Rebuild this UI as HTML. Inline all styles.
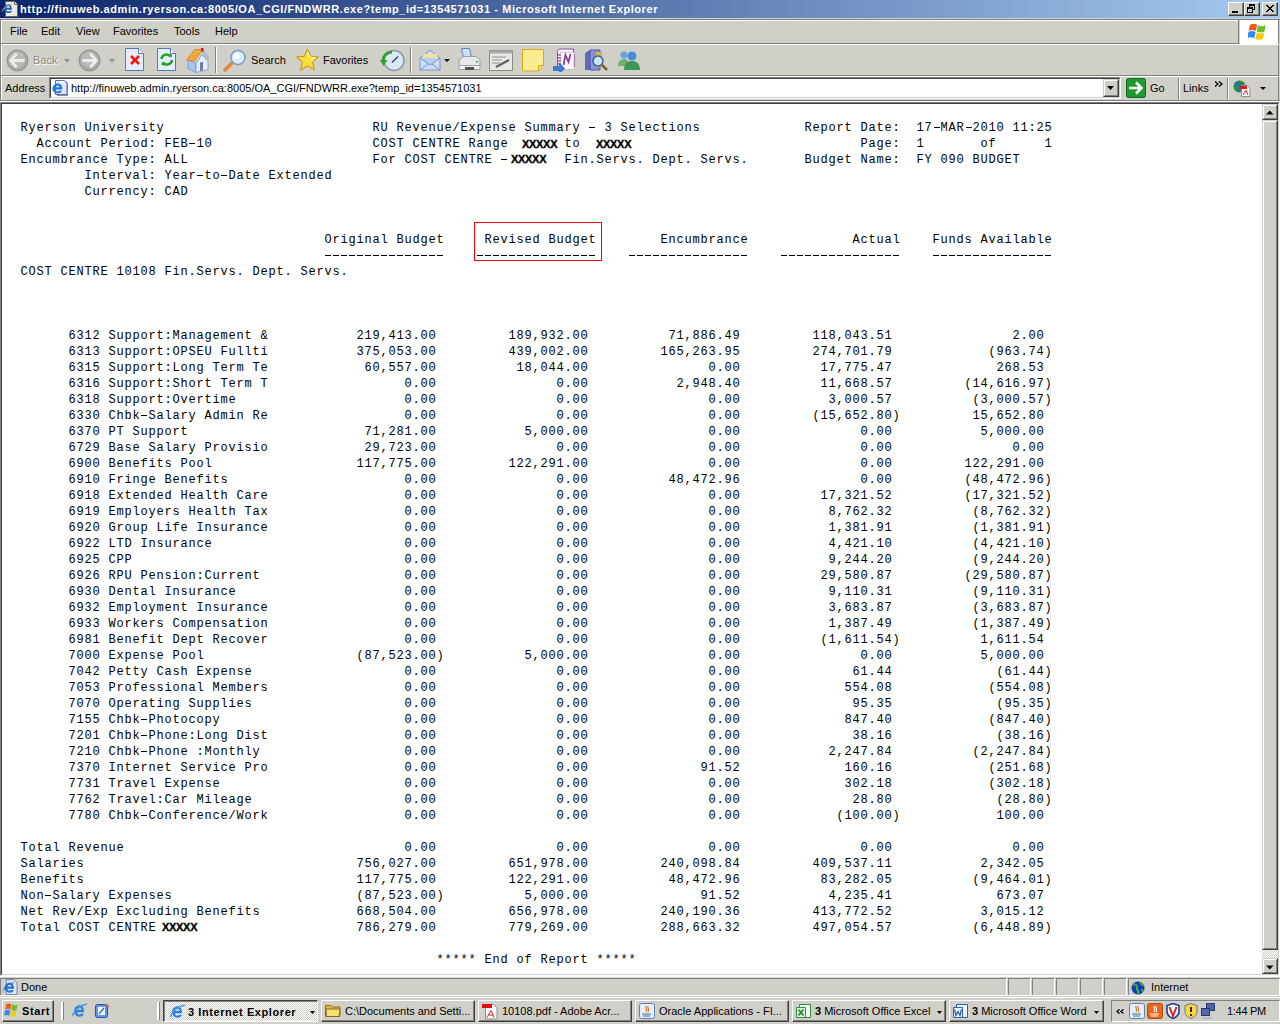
<!DOCTYPE html>
<html><head><meta charset="utf-8">
<style>
*{margin:0;padding:0;box-sizing:border-box}
html,body{width:1280px;height:1024px;overflow:hidden;background:#D0D0C8;font-family:"Liberation Sans",sans-serif;font-size:11px;color:#000}
.a{position:absolute}
.t{position:absolute;white-space:pre;line-height:13px}
#title{left:0;top:0;width:1280px;height:18px;background:linear-gradient(to right,#0A246A,#A6CAF0)}
#title .tx{left:20px;top:3px;color:#fff;font-weight:bold;font-size:11px;letter-spacing:0.565px}
.cb{position:absolute;top:2px;width:16px;height:14px;background:#D0D0C8;border-top:1px solid #fff;border-left:1px solid #fff;border-right:1px solid #404040;border-bottom:1px solid #404040;box-shadow:inset -1px -1px 0 #808080}
.hl{position:absolute;height:1px}
.vl{position:absolute;width:1px}
.sep{position:absolute;width:2px;border-left:1px solid #808080;border-right:1px solid #fff}
pre#rep{position:absolute;left:20.4px;top:120px;font-family:"Liberation Mono",monospace;font-size:12px;letter-spacing:0.8px;line-height:16px;color:#000;white-space:pre}
.xx{position:absolute;font-family:"Liberation Sans",sans-serif;font-weight:bold;font-size:11px;line-height:10px;letter-spacing:-0.3px;color:#000;background:#fff;-webkit-text-stroke:0.35px #000}
.hy{display:inline-block;width:8px;height:16px;vertical-align:top;background:linear-gradient(#000,#000) no-repeat 1px 7px/6px 1px}
.dash{position:absolute;top:255px;height:1px;width:120px;background:repeating-linear-gradient(to right,#000 0 6px,transparent 6px 8px)}
.sb{position:absolute;background:#D0D0C8;border-top:1px solid #D0D0C8;border-left:1px solid #D0D0C8;border-right:1px solid #404040;border-bottom:1px solid #404040}
.sbi{position:absolute;left:0;top:0;right:0;bottom:0;border-top:1px solid #fff;border-left:1px solid #fff;border-right:1px solid #808080;border-bottom:1px solid #808080}
.tb{position:absolute;top:1000px;height:22px;background:#D0D0C8;border-top:1px solid #fff;border-left:1px solid #fff;border-right:1px solid #404040;border-bottom:1px solid #404040}
.tbi{position:absolute;left:0;top:0;right:0;bottom:0;border-right:1px solid #808080;border-bottom:1px solid #808080}
</style></head><body>

<!-- TITLE BAR -->
<div id="title" class="a">
  <svg class="a" style="left:0px;top:0px" width="19" height="18" viewBox="0 0 19 18">
    <path d="M5.5 1.5h9l3 3v12h-12z" fill="#ECEADF" stroke="#6C685C" stroke-width="1"/>
    <path d="M14.5 1.5v3h3" fill="#fff" stroke="#6C685C" stroke-width="1"/>
    <path d="M8.6 4.2c-2.6 0-4.6 2-4.6 4.5s1.9 4.4 4.4 4.4c1.7 0 3-.8 3.5-2.2H9.6c-.3.4-.7.7-1.3.7-1 0-1.7-.8-1.8-1.8h5.4c.2-3-1.2-5.6-3.3-5.6zm-2 3.6c.1-.9.8-1.6 1.8-1.6.9 0 1.6.7 1.7 1.6z" fill="#1E5AD8"/>
    <path d="M2 11.5c1.5-3.5 4.5-6.2 10-7" fill="none" stroke="#D8B040" stroke-width="1"/>
  </svg>
  <div class="t tx">http://finuweb.admin.ryerson.ca:8005/OA_CGI/FNDWRR.exe?temp_id=1354571031 - Microsoft Internet Explorer</div>
  <div class="cb" style="left:1228px"><svg class="a" style="left:0;top:0" width="14" height="12" shape-rendering="crispEdges"><rect x="3" y="8" width="6" height="2" fill="#000"/></svg></div>
  <div class="cb" style="left:1244px"><svg class="a" style="left:0;top:0" width="14" height="12" shape-rendering="crispEdges"><rect x="4" y="1" width="6" height="2" fill="#000"/><rect x="9" y="1" width="1" height="6" fill="#000"/><rect x="7" y="6" width="3" height="1" fill="#000"/><rect x="4" y="1" width="1" height="3" fill="#000"/><rect x="2" y="4" width="6" height="2" fill="#000"/><rect x="2" y="4" width="1" height="6" fill="#000"/><rect x="7" y="4" width="1" height="6" fill="#000"/><rect x="2" y="9" width="6" height="1" fill="#000"/></svg></div>
  <div class="cb" style="left:1262px"><svg class="a" style="left:0;top:0" width="14" height="12" shape-rendering="crispEdges"><rect x="3" y="2" width="2" height="1" fill="#000"/><rect x="9" y="2" width="2" height="1" fill="#000"/><rect x="4" y="3" width="2" height="1" fill="#000"/><rect x="8" y="3" width="2" height="1" fill="#000"/><rect x="5" y="4" width="4" height="1" fill="#000"/><rect x="6" y="5" width="2" height="1" fill="#000"/><rect x="5" y="6" width="4" height="1" fill="#000"/><rect x="4" y="7" width="2" height="1" fill="#000"/><rect x="8" y="7" width="2" height="1" fill="#000"/><rect x="3" y="8" width="2" height="1" fill="#000"/><rect x="9" y="8" width="2" height="1" fill="#000"/></svg></div>
</div>

<!-- frame lines below title -->
<div class="hl" style="left:0;top:18px;width:1280px;background:#D0D0C8"></div>
<div class="hl" style="left:0;top:19px;width:1280px;background:#808080"></div>
<div class="vl" style="left:0;top:19px;height:82px;background:#808080"></div>
<div class="vl" style="left:1px;top:20px;height:81px;background:#fff"></div>

<!-- MENU BAR -->
<div class="hl" style="left:1px;top:20px;width:1238px;background:#fff"></div>
<div class="t" style="left:10px;top:25px">File</div>
<div class="t" style="left:41px;top:25px">Edit</div>
<div class="t" style="left:76px;top:25px">View</div>
<div class="t" style="left:113px;top:25px">Favorites</div>
<div class="t" style="left:174px;top:25px">Tools</div>
<div class="t" style="left:215px;top:25px">Help</div>
<div class="vl" style="left:1238px;top:20px;height:24px;background:#808080"></div>
<div class="a" style="left:1240px;top:20px;width:38px;height:24px;background:#fff"></div>
<svg class="a" style="left:1248px;top:22px" width="22" height="19" viewBox="0 0 24 21">
  <path d="M2 3c2.5-1.5 5-1.5 8 0l-1.5 7c-3-1.5-5.5-1.5-8 0z" fill="#F05A1E"/>
  <path d="M11 3.5c3 1.5 5.5 1.5 8.5 0l-1.5 7c-3 1.5-5.5 1.5-8.5 0z" fill="#6EBE2C"/>
  <path d="M0.3 11c2.5-1.5 5-1.5 8 0l-1.5 7c-3-1.5-5.5-1.5-8 0z" fill="#2E8DEF"/>
  <path d="M9.5 11.5c3 1.5 5.5 1.5 8.5 0l-1.5 7c-3 1.5-5.5 1.5-8.5 0z" fill="#F8C80A"/>
</svg>
<div class="hl" style="left:1px;top:43px;width:1238px;background:#808080"></div>
<div class="vl" style="left:1278px;top:19px;height:82px;background:#808080"></div>
<div class="hl" style="left:1px;top:44px;width:1278px;background:#fff"></div>

<!-- TOOLBAR -->
<div id="toolbar">
  <!-- back -->
  <svg class="a" style="left:6px;top:49px" width="23" height="23" viewBox="0 0 23 23">
    <circle cx="11.5" cy="11.5" r="10.5" fill="#A8A8A4" stroke="#8C8C88"/>
    <circle cx="11" cy="10.5" r="8" fill="#BABAB6"/>
    <path d="M10 5.5L4.5 11.5L10 17.5M5 11.5h12.5" fill="none" stroke="#EDEDED" stroke-width="2.8" stroke-linecap="round" stroke-linejoin="round"/>
  </svg>
  <div class="t" style="left:33px;top:54px;color:#888;text-shadow:1px 1px 0 #fff">Back</div>
  <svg class="a" style="left:64px;top:59px" width="6" height="4"><path d="M0 0h6l-3 3.5z" fill="#8C8C8C"/></svg>
  <!-- forward -->
  <svg class="a" style="left:78px;top:49px" width="23" height="23" viewBox="0 0 23 23">
    <circle cx="11.5" cy="11.5" r="10.5" fill="#A8A8A4" stroke="#8C8C88"/>
    <circle cx="11" cy="10.5" r="8" fill="#BABAB6"/>
    <path d="M13 5.5L18.5 11.5L13 17.5M18 11.5H5.5" fill="none" stroke="#EDEDED" stroke-width="2.8" stroke-linecap="round" stroke-linejoin="round"/>
  </svg>
  <svg class="a" style="left:109px;top:59px" width="6" height="4"><path d="M0 0h6l-3 3.5z" fill="#8C8C8C"/></svg>
  <!-- stop -->
  <svg class="a" style="left:125px;top:48px" width="20" height="23" viewBox="0 0 20 23">
    <path d="M0.5 0.5h13l5 5v17H0.5z" fill="#E4EEFA" stroke="#5A78B8"/>
    <path d="M13.5 0.5v5h5" fill="#fff" stroke="#5A78B8"/>
    <path d="M6 8l8 8M14 8l-8 8" stroke="#F01808" stroke-width="2.6"/>
  </svg>
  <!-- refresh -->
  <svg class="a" style="left:157px;top:48px" width="20" height="23" viewBox="0 0 20 23">
    <path d="M0.5 0.5h13l5 5v17H0.5z" fill="#E4EEFA" stroke="#5A78B8"/>
    <path d="M13.5 0.5v5h5" fill="#fff" stroke="#5A78B8"/>
    <path d="M4.5 11a5 5 0 0 1 9-2.5M15 12a5 5 0 0 1-9 2.5" fill="none" stroke="#20A020" stroke-width="2.4"/>
    <path d="M11.5 6l3.5 0.5-0.5 3.5zM8 17.5l-3.5-0.5 0.5-3.5z" fill="#20A020"/>
  </svg>
  <!-- home -->
  <svg class="a" style="left:186px;top:48px" width="24" height="25" viewBox="0 0 24 25">
    <path d="M2 12l8 3.5v9L2 20.5z" fill="#A8C8F0" stroke="#7890C0" stroke-width="0.8"/>
    <path d="M10 15.5l6-9 6 7v8l-12 3z" fill="#E4EEFC" stroke="#7890C0" stroke-width="0.8"/>
    <path d="M0.5 12L9 1.5h7.5L8.5 13z" fill="#F4A838" stroke="#D87818" stroke-width="0.8"/>
    <path d="M16.5 1.5l6 8.5-1.5.5-4.5-6.5z" fill="#E8F0FC" stroke="#7890C0" stroke-width="0.8"/>
    <rect x="15" y="0" width="2.5" height="3.5" fill="#C02818"/>
    <path d="M14 14.5l3-.7v8.5l-3 .7z" fill="#7078A8"/>
  </svg>
  <div class="sep" style="left:215px;top:47px;height:26px"></div>
  <!-- search -->
  <svg class="a" style="left:223px;top:49px" width="24" height="23" viewBox="0 0 24 23">
    <path d="M2 21l7-7" stroke="#E08838" stroke-width="3.5" stroke-linecap="round"/>
    <circle cx="15" cy="8.5" r="7" fill="#D8EEFC" stroke="#7A9CC0" stroke-width="1.5"/>
    <circle cx="13.5" cy="7" r="3" fill="#fff" opacity=".8"/>
  </svg>
  <div class="t" style="left:251px;top:54px">Search</div>
  <!-- star -->
  <svg class="a" style="left:295px;top:48px" width="25" height="24" viewBox="0 0 25 24">
    <path d="M12.5 1l3.2 7.3 7.8.7-5.9 5.2 1.8 7.8-6.9-4.1-6.9 4.1 1.8-7.8L1.5 9l7.8-.7z" fill="#F8DC38" stroke="#C09010" stroke-width="1"/>
    <path d="M12.5 4l2 5 5 .5-3.5 3" fill="none" stroke="#FFF6B0" stroke-width="1.2"/>
  </svg>
  <div class="t" style="left:323px;top:54px">Favorites</div>
  <!-- history -->
  <svg class="a" style="left:380px;top:49px" width="25" height="23" viewBox="0 0 25 23">
    <circle cx="14" cy="11.5" r="10" fill="#D8E8F4" stroke="#8898A8" stroke-width="1.5"/>
    <path d="M14 11.5l4-4M14 11.5l-2 2" stroke="#404858" stroke-width="1.5"/>
    <path d="M3 12c0-5 4-9 9-9" fill="none" stroke="#30A030" stroke-width="3"/>
    <path d="M0 11l3.5 6 4-6z" fill="#30A030"/>
  </svg>
  <div class="sep" style="left:410px;top:47px;height:26px"></div>
  <!-- mail -->
  <svg class="a" style="left:419px;top:48px" width="22" height="24" viewBox="0 0 22 24">
    <path d="M1 10l10-8 10 8v12H1z" fill="#C8DEF8" stroke="#8890C8"/>
    <path d="M4 6h14v8H4z" fill="#F8E0A0"/>
    <path d="M1 10l10 7 10-7" fill="#B0D0F4" stroke="#8890C8"/>
    <path d="M1 22l8-6M21 22l-8-6" stroke="#8890C8"/>
  </svg>
  <svg class="a" style="left:444px;top:59px" width="6" height="4"><path d="M0 0h6l-3 3z" fill="#000"/></svg>
  <!-- print -->
  <svg class="a" style="left:458px;top:48px" width="23" height="24" viewBox="0 0 23 24">
    <path d="M3.5 0.5h8l2 9h-8z" fill="#C8E0F8" stroke="#7080C0" stroke-width="1"/>
    <path d="M1 11.5l5-3h12l4 3v6H1z" fill="#E8E8E8" stroke="#A0A0A0" stroke-width="1"/>
    <path d="M1 17.5h21v4H1z" fill="#F4F4F4" stroke="#A0A0A0" stroke-width="1"/>
    <path d="M7 19h9v3H7z" fill="#505058"/>
    <rect x="18" y="13" width="2" height="1.5" fill="#30C030"/>
  </svg>
  <!-- edit -->
  <svg class="a" style="left:489px;top:50px" width="24" height="21" viewBox="0 0 24 21">
    <rect x="0.5" y="0.5" width="23" height="20" fill="#E8E8E4" stroke="#888"/>
    <rect x="0.5" y="0.5" width="23" height="3" fill="#A8A8A8"/>
    <path d="M3 7h14M3 10h10M3 13h8" stroke="#909090"/>
    <path d="M7 17l13-7" stroke="#606060" stroke-width="2"/>
  </svg>
  <!-- note -->
  <svg class="a" style="left:522px;top:49px" width="23" height="23" viewBox="0 0 23 23">
    <path d="M0.5 0.5h21v16l-5 5.5H0.5z" fill="#FCEC90" stroke="#D8A818"/>
    <path d="M16.5 22v-5.5h5" fill="#F8D868" stroke="#D8A818"/>
  </svg>
  <!-- onenote -->
  <svg class="a" style="left:553px;top:48px" width="25" height="24" viewBox="0 0 25 24">
    <path d="M4.5 3.5c0-1.5 1-2.5 2.5-2.5h13.5v20H7.5c-1.5 0-3-1-3-2.5z" fill="#F4ECF4" stroke="#9050A0" stroke-width="1"/>
    <path d="M7.5 4.5h13.5v17H7.5z" fill="#fff" stroke="#C8B0C8" stroke-width="0.6"/>
    <path d="M5 7h3M5 10h3M5 13h3M5 16h3" stroke="#A060B0" stroke-width="1.4"/>
    <path d="M10.5 17l2-10 3 7 2-8" fill="none" stroke="#8C3C9C" stroke-width="1.8"/>
    <path d="M21.5 6v13" stroke="#B080B8" stroke-width="1.2"/>
    <path d="M0.5 18.5h6v-3.5l5 5.5-5 5.5v-3.5h-6z" fill="#3C78D8" stroke="#2050A8" stroke-width="0.6"/>
  </svg>
  <!-- research -->
  <svg class="a" style="left:584px;top:49px" width="24" height="22" viewBox="0 0 24 22">
    <path d="M1 4l5-3v20l-5 0z" fill="#6068C0"/>
    <path d="M6 1h10v20H6z" fill="#8890D8" stroke="#5058A8"/>
    <path d="M12 3h6v15h-6z" fill="#D8B050"/>
    <circle cx="14" cy="12" r="5" fill="#C8E4F8" stroke="#406080" stroke-width="1.5"/>
    <path d="M18 16l5 5" stroke="#806030" stroke-width="2.5"/>
  </svg>
  <!-- messenger -->
  <svg class="a" style="left:617px;top:50px" width="24" height="21" viewBox="0 0 24 21">
    <circle cx="7" cy="5" r="3.5" fill="#6AA0E0"/>
    <path d="M1 16c0-5 3-7 6-7s5 2 5 7z" fill="#70B070"/>
    <circle cx="15" cy="6" r="4.5" fill="#4C8CD8"/>
    <path d="M7 20c0-7 4-9 8-9s8 2 8 9z" fill="#3C9850"/>
  </svg>
</div>
<div class="hl" style="left:1px;top:75px;width:1278px;background:#808080"></div>
<div class="hl" style="left:1px;top:76px;width:1278px;background:#fff"></div>

<!-- ADDRESS BAR -->
<div class="t" style="left:5px;top:82px">Address</div>
<div class="a" style="left:49px;top:77px;width:1072px;height:22px;background:#fff;border-top:1px solid #808080;border-left:1px solid #808080;border-right:1px solid #fff;border-bottom:1px solid #fff"></div>
<div class="a" style="left:50px;top:78px;width:1070px;height:20px;border-top:1px solid #404040;border-left:1px solid #404040;border-right:1px solid #D0D0C8;border-bottom:1px solid #D0D0C8"></div>
<svg class="a" style="left:51px;top:79px" width="18" height="18" viewBox="0 0 18 18">
  <path d="M6 2h9l2 2v13H6z" fill="#909090"/>
  <path d="M4.5 1.5h9l2.5 2.5v11.5H4.5z" fill="#DCE6FA" stroke="#6068B0" stroke-width="1"/>
  <path d="M5 2h8v2H5z" fill="#fff"/>
  <path d="M7 4.5c-3 0-5.5 2.2-5.5 5s2.3 4.8 5.2 4.8c2 0 3.6-1 4.2-2.6H8.3c-.4.5-.9.8-1.6.8-1.2 0-2.1-.9-2.2-2.1h6.8c.2-3.5-1.6-5.9-4.3-5.9zm-2.5 3.8c.2-1 1-1.8 2.2-1.8 1.1 0 1.9.7 2 1.8z" fill="#1C78E0"/>
  <path d="M1 9.5c2-4 5.5-7.5 11-8.5" fill="none" stroke="#78B8F0" stroke-width="1" stroke-dasharray="1 1"/>
</svg>
<div class="t" style="left:71px;top:82px">http://finuweb.admin.ryerson.ca:8005/OA_CGI/FNDWRR.exe?temp_id=1354571031</div>
<!-- dropdown btn -->
<div class="a" style="left:1103px;top:79px;width:16px;height:18px;background:#D0D0C8;border-top:1px solid #D0D0C8;border-left:1px solid #D0D0C8;border-right:1px solid #404040;border-bottom:1px solid #404040">
  <div class="a" style="left:0;top:0;right:0;bottom:0;border-top:1px solid #fff;border-left:1px solid #fff;border-right:1px solid #808080;border-bottom:1px solid #808080"></div>
  <svg class="a" style="left:3px;top:6px" width="7" height="4"><path d="M0 0h7l-3.5 4z" fill="#000"/></svg>
</div>
<!-- go -->
<svg class="a" style="left:1126px;top:78px" width="20" height="20" viewBox="0 0 20 20">
  <rect x="0.5" y="0.5" width="19" height="19" rx="2" fill="#1E9A2E" stroke="#0E6A1E"/>
  <path d="M3 10h12M10 4.5l5.5 5.5-5.5 5.5" fill="none" stroke="#fff" stroke-width="2.6"/>
</svg>
<div class="t" style="left:1150px;top:82px">Go</div>
<div class="sep" style="left:1178px;top:78px;height:21px"></div>
<div class="t" style="left:1183px;top:82px">Links</div>
<svg class="a" style="left:1214px;top:81px" width="9" height="6"><path d="M1 0.5l3 2.5-3 2.5M5 0.5l3 2.5-3 2.5" fill="none" stroke="#000" stroke-width="1.3"/></svg>
<div class="sep" style="left:1227px;top:78px;height:21px"></div>
<svg class="a" style="left:1233px;top:80px" width="18" height="17" viewBox="0 0 18 17">
  <circle cx="6.5" cy="6.5" r="6" fill="#2C8C3C"/>
  <path d="M2 3c2 1 4 0 5 2s-2 4 0 6" fill="none" stroke="#2070D0" stroke-width="2.5"/>
  <path d="M8.5 5.5h6l2.5 2.5v8.5h-8.5z" fill="#F4F4F4" stroke="#909090"/>
  <rect x="7" y="6" width="7" height="3" fill="#E81818"/>
  <path d="M10 15l3-5 2 5" fill="none" stroke="#E83030" stroke-width="1"/>
</svg>
<svg class="a" style="left:1260px;top:87px" width="6" height="4"><path d="M0 0h6l-3 3z" fill="#000"/></svg>
<div class="hl" style="left:0;top:100px;width:1280px;background:#808080"></div>
<div class="hl" style="left:0;top:101px;width:1280px;background:#fff"></div>

<!-- CONTENT -->
<div class="a" style="left:0;top:102px;width:1280px;height:874px;background:#fff;border-top:1px solid #808080;border-left:1px solid #808080;border-right:1px solid #fff;border-bottom:1px solid #fff"></div>
<div class="a" style="left:1px;top:103px;width:1278px;height:872px;border-top:1px solid #404040;border-left:1px solid #404040;border-right:1px solid #D0D0C8;border-bottom:1px solid #D0D0C8"></div>

<pre id="rep">Ryerson University                          RU Revenue/Expense Summary <span class="hy"></span> 3 Selections             Report Date:  17<span class="hy"></span>MAR<span class="hy"></span>2010 11:25
  Account Period: FEB<span class="hy"></span>10                    COST CENTRE Range       to                                   Page:  1       of      1
Encumbrance Type: ALL                       For COST CENTRE <span class="hy"></span>       Fin.Servs. Dept. Servs.       Budget Name:  FY 090 BUDGET
        Interval: Year<span class="hy"></span>to<span class="hy"></span>Date Extended
        Currency: CAD


                                      Original Budget     Revised Budget        Encumbrance             Actual    Funds Available

COST CENTRE 10108 Fin.Servs. Dept. Servs.



      6312 Support:Management &amp;           219,413.00         189,932.00          71,886.49         118,043.51               2.00 
      6313 Support:OPSEU Fullti           375,053.00         439,002.00         165,263.95         274,701.79            (963.74)
      6315 Support:Long Term Te            60,557.00          18,044.00               0.00          17,775.47             268.53 
      6316 Support:Short Term T                 0.00               0.00           2,948.40          11,668.57         (14,616.97)
      6318 Support:Overtime                     0.00               0.00               0.00           3,000.57          (3,000.57)
      6330 Chbk<span class="hy"></span>Salary Admin Re                 0.00               0.00               0.00         (15,652.80)         15,652.80 
      6370 PT Support                      71,281.00           5,000.00               0.00               0.00           5,000.00 
      6729 Base Salary Provisio            29,723.00               0.00               0.00               0.00               0.00 
      6900 Benefits Pool                  117,775.00         122,291.00               0.00               0.00         122,291.00 
      6910 Fringe Benefits                      0.00               0.00          48,472.96               0.00         (48,472.96)
      6918 Extended Health Care                 0.00               0.00               0.00          17,321.52         (17,321.52)
      6919 Employers Health Tax                 0.00               0.00               0.00           8,762.32          (8,762.32)
      6920 Group Life Insurance                 0.00               0.00               0.00           1,381.91          (1,381.91)
      6922 LTD Insurance                        0.00               0.00               0.00           4,421.10          (4,421.10)
      6925 CPP                                  0.00               0.00               0.00           9,244.20          (9,244.20)
      6926 RPU Pension:Current                  0.00               0.00               0.00          29,580.87         (29,580.87)
      6930 Dental Insurance                     0.00               0.00               0.00           9,110.31          (9,110.31)
      6932 Employment Insurance                 0.00               0.00               0.00           3,683.87          (3,683.87)
      6933 Workers Compensation                 0.00               0.00               0.00           1,387.49          (1,387.49)
      6981 Benefit Dept Recover                 0.00               0.00               0.00          (1,611.54)          1,611.54 
      7000 Expense Pool                   (87,523.00)          5,000.00               0.00               0.00           5,000.00 
      7042 Petty Cash Expense                   0.00               0.00               0.00              61.44             (61.44)
      7053 Professional Members                 0.00               0.00               0.00             554.08            (554.08)
      7070 Operating Supplies                   0.00               0.00               0.00              95.35             (95.35)
      7155 Chbk<span class="hy"></span>Photocopy                       0.00               0.00               0.00             847.40            (847.40)
      7201 Chbk<span class="hy"></span>Phone:Long Dist                 0.00               0.00               0.00              38.16             (38.16)
      7210 Chbk<span class="hy"></span>Phone :Monthly                  0.00               0.00               0.00           2,247.84          (2,247.84)
      7370 Internet Service Pro                 0.00               0.00              91.52             160.16            (251.68)
      7731 Travel Expense                       0.00               0.00               0.00             302.18            (302.18)
      7762 Travel:Car Mileage                   0.00               0.00               0.00              28.80             (28.80)
      7780 Chbk<span class="hy"></span>Conference/Work                 0.00               0.00               0.00            (100.00)            100.00 

Total Revenue                                   0.00               0.00               0.00               0.00               0.00 
Salaries                                  756,027.00         651,978.00         240,098.84         409,537.11           2,342.05 
Benefits                                  117,775.00         122,291.00          48,472.96          83,282.05          (9,464.01)
Non<span class="hy"></span>Salary Expenses                       (87,523.00)          5,000.00              91.52           4,235.41             673.07 
Net Rev/Exp Excluding Benefits            668,504.00         656,978.00         240,190.36         413,772.52           3,015.12 
Total COST CENTRE                         786,279.00         779,269.00         288,663.32         497,054.57          (6,448.89)

                                                    ***** End of Report *****</pre>
<div class="dash" style="left:325px"></div>
<div class="dash" style="left:477px"></div>
<div class="dash" style="left:629px"></div>
<div class="dash" style="left:781px"></div>
<div class="dash" style="left:933px"></div>
<div class="xx" style="left:522px;top:139px">XXXXX</div>
<div class="xx" style="left:596px;top:139px">XXXXX</div>
<div class="xx" style="left:511px;top:154px">XXXXX</div>
<div class="xx" style="left:162px;top:922px">XXXXX</div>
<div class="a" style="left:474px;top:222px;width:128px;height:39px;border:1px solid #F00000"></div>

<!-- SCROLLBAR -->
<div class="sb" style="left:1262px;top:104px;width:16px;height:16px"><div class="sbi"></div>
  <svg class="a" style="left:3px;top:5px" width="8" height="5"><path d="M0 4.5h7.5L3.75 0.5z" fill="#000"/></svg></div>
<div class="sb" style="left:1262px;top:120px;width:16px;height:830px"><div class="sbi"></div></div>
<div class="a" style="left:1262px;top:950px;width:16px;height:8px;background-color:#fff;background-image:linear-gradient(45deg,#D0D0C8 25%,transparent 25%,transparent 75%,#D0D0C8 75%),linear-gradient(45deg,#D0D0C8 25%,transparent 25%,transparent 75%,#D0D0C8 75%);background-size:2px 2px;background-position:0 0,1px 1px"></div>
<div class="sb" style="left:1262px;top:958px;width:16px;height:16px"><div class="sbi"></div>
  <svg class="a" style="left:3px;top:6px" width="8" height="5"><path d="M0 0.5h7.5L3.75 4.5z" fill="#000"/></svg></div>

<!-- STATUS BAR -->
<div class="hl" style="left:0;top:976px;width:1280px;background:#fff"></div>
<div class="a" style="left:0px;top:978px;width:1007px;height:18px;border-top:1px solid #808080;border-left:1px solid #808080;border-right:1px solid #fff;border-bottom:1px solid #fff"></div>
<div class="a" style="left:1008px;top:978px;width:23px;height:18px;border-top:1px solid #808080;border-left:1px solid #808080;border-right:1px solid #fff;border-bottom:1px solid #fff"></div>
<div class="a" style="left:1032px;top:978px;width:23px;height:18px;border-top:1px solid #808080;border-left:1px solid #808080;border-right:1px solid #fff;border-bottom:1px solid #fff"></div>
<div class="a" style="left:1056px;top:978px;width:23px;height:18px;border-top:1px solid #808080;border-left:1px solid #808080;border-right:1px solid #fff;border-bottom:1px solid #fff"></div>
<div class="a" style="left:1080px;top:978px;width:23px;height:18px;border-top:1px solid #808080;border-left:1px solid #808080;border-right:1px solid #fff;border-bottom:1px solid #fff"></div>
<div class="a" style="left:1104px;top:978px;width:23px;height:18px;border-top:1px solid #808080;border-left:1px solid #808080;border-right:1px solid #fff;border-bottom:1px solid #fff"></div>
<div class="a" style="left:1128px;top:978px;width:152px;height:18px;border-top:1px solid #808080;border-left:1px solid #808080;border-right:1px solid #fff;border-bottom:1px solid #fff"></div>
<svg class="a" style="left:2px;top:979px" width="16" height="16" viewBox="0 0 17 17">
  <path d="M4.5 0.5h8l3.5 3.5v12.5H4.5z" fill="#D8E4F8" stroke="#7080B0"/>
  <path d="M8.5 4c-3.2 0-5.7 2.2-5.7 5.3s2.4 5.2 5.4 5.2c2.2 0 3.8-1.1 4.4-2.8h-2.8c-.4.5-1 .9-1.7.9-1.3 0-2.3-1-2.4-2.3h7c.2-3.7-1.6-6.3-4.2-6.3zm-2.7 4.1c.2-1.1 1.1-1.9 2.4-1.9 1.2 0 2 .8 2.1 1.9z" fill="#1E70D8"/>
  <path d="M1 12.5c2-4.5 6-8 11.5-8.5" fill="none" stroke="#1E70D8" stroke-width="1"/>
</svg>
<div class="t" style="left:21px;top:981px">Done</div>
<svg class="a" style="left:1131px;top:981px" width="14" height="14" viewBox="0 0 14 14">
  <circle cx="7" cy="7" r="6.5" fill="#1838B8"/>
  <path d="M2.5 3c1.5 1 3 .5 3.5 2s-1 2.5.5 4 1 3 0 4M9 1.5c1 1.5 2.5 2 3.5 3.5M10 9c1 0 2 .5 2.5 1.5" fill="none" stroke="#38B038" stroke-width="2.2"/>
</svg>
<div class="t" style="left:1151px;top:981px">Internet</div>

<!-- TASKBAR -->
<div class="hl" style="left:0;top:995px;width:1280px;background:#fff"></div>
<div class="hl" style="left:0;top:997px;width:1280px;background:#fff"></div>
<div class="tb" style="left:2px;width:52px"><div class="tbi"></div></div>
<svg class="a" style="left:4px;top:1003px" width="16" height="14" viewBox="0 0 16 14">
  <path d="M2.2 1.2c1.7-1 3.4-1 5.2 0l-1 5.3c-1.8-1-3.5-1-5.2 0z" fill="#F05A1E"/>
  <path d="M8.3 1.6c1.7 1 3.4 1 5.2 0l-1 5.3c-1.8 1-3.5 1-5.2 0z" fill="#6EBE2C"/>
  <path d="M1 7.4c1.7-1 3.4-1 5.2 0l-1 5.3c-1.8-1-3.5-1-5.2 0z" fill="#2E8DEF"/>
  <path d="M7.1 7.8c1.7 1 3.4 1 5.2 0l-1 5.3c-1.8 1-3.5 1-5.2 0z" fill="#F8C80A"/>
</svg>
<div class="t" style="left:22px;top:1005px;font-weight:bold;letter-spacing:0.6px">Start</div>
<div class="a" style="left:61px;top:1002px;width:2px;height:18px;background:#fff"></div>
<div class="a" style="left:63px;top:1002px;width:1px;height:18px;background:#808080"></div>
<svg class="a" style="left:71px;top:1002px" width="17" height="17" viewBox="0 0 17 17">
  <path d="M8.8 3.2c-3.2 0-5.7 2.4-5.7 5.8s2.4 5.7 5.4 5.7c2.2 0 3.8-1.2 4.4-3h-2.8c-.4.5-1 1-1.7 1-1.3 0-2.3-1.1-2.4-2.5h7c.2-4-1.6-7-4.2-7zm-2.7 4.5c.2-1.2 1.1-2 2.4-2 1.2 0 2 .8 2.1 2z" fill="#2A80E0"/>
  <path d="M1.2 14c2-5.5 6.5-10 14.5-12" fill="none" stroke="#4898E8" stroke-width="1.4"/>
</svg>
<svg class="a" style="left:94px;top:1003px" width="16" height="16" viewBox="0 0 16 16">
  <rect x="1.5" y="1.5" width="12" height="13" rx="2" fill="#5A98E8" stroke="#2850A8"/>
  <rect x="4" y="4" width="7" height="8" fill="#fff"/>
  <path d="M5 11l5-6" stroke="#2A70D0" stroke-width="1.5"/>
  <path d="M12 1l3 3" stroke="#E86020" stroke-width="1.5"/>
</svg>
<div class="a" style="left:157px;top:1002px;width:2px;height:18px;background:#fff"></div>
<div class="a" style="left:159px;top:1002px;width:1px;height:18px;background:#808080"></div>
<!-- active IE group -->
<div class="a" style="left:163px;top:1000px;width:155px;height:22px;border-top:1px solid #404040;border-left:1px solid #404040;border-right:1px solid #fff;border-bottom:1px solid #fff;background-color:#fff;background-image:linear-gradient(45deg,#D0D0C8 25%,transparent 25%,transparent 75%,#D0D0C8 75%),linear-gradient(45deg,#D0D0C8 25%,transparent 25%,transparent 75%,#D0D0C8 75%);background-size:2px 2px;background-position:0 0,1px 1px"></div>
<div class="a" style="left:164px;top:1001px;width:153px;height:20px;border-top:1px solid #808080;border-left:1px solid #808080"></div>
<svg class="a" style="left:169px;top:1003px" width="17" height="17" viewBox="0 0 17 17">
  <path d="M8.8 3.2c-3.2 0-5.7 2.4-5.7 5.8s2.4 5.7 5.4 5.7c2.2 0 3.8-1.2 4.4-3h-2.8c-.4.5-1 1-1.7 1-1.3 0-2.3-1.1-2.4-2.5h7c.2-4-1.6-7-4.2-7zm-2.7 4.5c.2-1.2 1.1-2 2.4-2 1.2 0 2 .8 2.1 2z" fill="#2A80E0"/>
  <path d="M1.2 14c2-5.5 6.5-10 14.5-12" fill="none" stroke="#4898E8" stroke-width="1.4"/>
</svg>
<div class="t" style="left:188px;top:1006px;font-weight:bold;letter-spacing:0.58px">3 Internet Explorer</div>
<svg class="a" style="left:310px;top:1011px" width="5" height="3"><path d="M0 0h5l-2.5 3z" fill="#000"/></svg>
<div class="tb" style="left:321px;width:154px"><div class="tbi"></div></div>
<svg class="a" style="left:325px;top:1003px" width="16" height="14" viewBox="0 0 16 14">
  <path d="M0.5 2.5h5.5l1.5 1.5h7.5v9.5H0.5z" fill="#E0B840" stroke="#8C6C18"/>
  <path d="M1 6h14l-1 7.5H1.5z" fill="#F8E078" stroke="#8C6C18"/>
</svg>
<div class="t" style="left:345px;top:1005px">C:\Documents and Setti...</div>
<div class="tb" style="left:478px;width:154px"><div class="tbi"></div></div>
<svg class="a" style="left:482px;top:1003px" width="16" height="17" viewBox="0 0 16 17">
  <path d="M3.5 1.5h8l3.5 3.5v11H3.5z" fill="#F8F8F8" stroke="#909090"/>
  <rect x="0" y="1" width="10" height="4" fill="#E01010"/>
  <path d="M5 14.5l4-7 3 7M6.5 12h5" fill="none" stroke="#E02020" stroke-width="1"/>
</svg>
<div class="t" style="left:502px;top:1005px">10108.pdf - Adobe Acr...</div>
<div class="tb" style="left:635px;width:154px"><div class="tbi"></div></div>
<svg class="a" style="left:639px;top:1003px" width="16" height="16" viewBox="0 0 16 16">
  <rect x="0.5" y="0.5" width="15" height="15" rx="2" fill="#E8EEF8" stroke="#6080B0"/>
  <path d="M7 3c-1 2 2 3 0 6M9 3c-1 2 2 3 0 6" fill="none" stroke="#E07820" stroke-width="1.2"/>
  <path d="M3 11h9M4 13h7" stroke="#3070B0" stroke-width="1.2"/>
</svg>
<div class="t" style="left:659px;top:1005px">Oracle Applications - FI...</div>
<div class="tb" style="left:792px;width:154px"><div class="tbi"></div></div>
<svg class="a" style="left:796px;top:1003px" width="16" height="16" viewBox="0 0 16 16">
  <path d="M3.5 1.5h11v13h-11z" fill="#F0F8F0" stroke="#309040"/>
  <path d="M0.5 4.5h9v10h-9z" fill="#E8F4E8" stroke="#309040"/>
  <path d="M2.5 6.5l5 6M7.5 6.5l-5 6" stroke="#209030" stroke-width="1.8"/>
</svg>
<div class="t" style="left:815px;top:1005px"><b>3</b> Microsoft Office Excel</div>
<svg class="a" style="left:937px;top:1011px" width="5" height="3"><path d="M0 0h5l-2.5 3z" fill="#000"/></svg>
<div class="tb" style="left:949px;width:155px"><div class="tbi"></div></div>
<svg class="a" style="left:953px;top:1003px" width="16" height="16" viewBox="0 0 16 16">
  <path d="M3.5 1.5h11v13h-11z" fill="#F0F4FC" stroke="#3060B0"/>
  <path d="M0.5 4.5h9v10h-9z" fill="#E8EEF8" stroke="#3060B0"/>
  <path d="M1.5 6.5l1.5 6 2-4 2 4 1.5-6" fill="none" stroke="#2858B8" stroke-width="1.2"/>
</svg>
<div class="t" style="left:972px;top:1005px"><b>3</b> Microsoft Office Word</div>
<svg class="a" style="left:1094px;top:1011px" width="5" height="3"><path d="M0 0h5l-2.5 3z" fill="#000"/></svg>
<!-- tray -->
<div class="a" style="left:1111px;top:1000px;width:169px;height:22px;border-top:1px solid #808080;border-left:1px solid #808080;border-right:1px solid #fff;border-bottom:1px solid #fff"></div>
<svg class="a" style="left:1116px;top:1009px" width="8" height="5"><path d="M3.5 0.5L1 2.5l2.5 2M7.5 0.5L5 2.5l2.5 2" fill="none" stroke="#000" stroke-width="1.4"/></svg>
<svg class="a" style="left:1129px;top:1003px" width="16" height="16" viewBox="0 0 16 16">
  <rect x="0.5" y="0.5" width="15" height="15" rx="2" fill="#E8EEF8" stroke="#6080B0"/>
  <path d="M7 3c-1 2 2 3 0 6M9 3c-1 2 2 3 0 6" fill="none" stroke="#E07820" stroke-width="1.2"/>
  <path d="M3 11h9M4 13h7" stroke="#3070B0" stroke-width="1.2"/>
</svg>
<svg class="a" style="left:1147px;top:1003px" width="16" height="16" viewBox="0 0 16 16">
  <rect x="0.5" y="0.5" width="15" height="15" rx="2" fill="#E86818" stroke="#B04810"/>
  <path d="M7 3c-1 2 2 3 0 6M9 3c-1 2 2 3 0 6" fill="none" stroke="#fff" stroke-width="1.2"/>
  <path d="M3 11h9M4 13h7" stroke="#fff" stroke-width="1.2"/>
</svg>
<svg class="a" style="left:1166px;top:1003px" width="14" height="16" viewBox="0 0 14 16">
  <path d="M7 0.5l6 2v6c0 3.5-2.5 5.5-6 7C3.5 14 1 12 1 8.5v-6z" fill="#fff" stroke="#1840A0" stroke-width="1.6"/>
  <path d="M3.5 4l3.5 9 3.5-9" fill="none" stroke="#E02020" stroke-width="2"/>
</svg>
<svg class="a" style="left:1184px;top:1003px" width="14" height="16" viewBox="0 0 14 16">
  <path d="M7 0.5l6 2v6c0 3.5-2.5 5.5-6 7C3.5 14 1 12 1 8.5v-6z" fill="#F8D838" stroke="#6070A0"/>
  <path d="M7 4v5M7 11v2" stroke="#000" stroke-width="1.6"/>
</svg>
<svg class="a" style="left:1201px;top:1003px" width="14" height="16" viewBox="0 0 14 16">
  <rect x="5.5" y="0.5" width="8" height="7" fill="#5060A8" stroke="#283878"/>
  <rect x="0.5" y="5.5" width="8" height="7" fill="#5868B0" stroke="#283878"/>
  <path d="M1 15h10" stroke="#B0B8D0" stroke-width="2"/>
</svg>
<div class="t" style="left:1227px;top:1005px;letter-spacing:-0.3px">1:44 PM</div>

</body></html>
